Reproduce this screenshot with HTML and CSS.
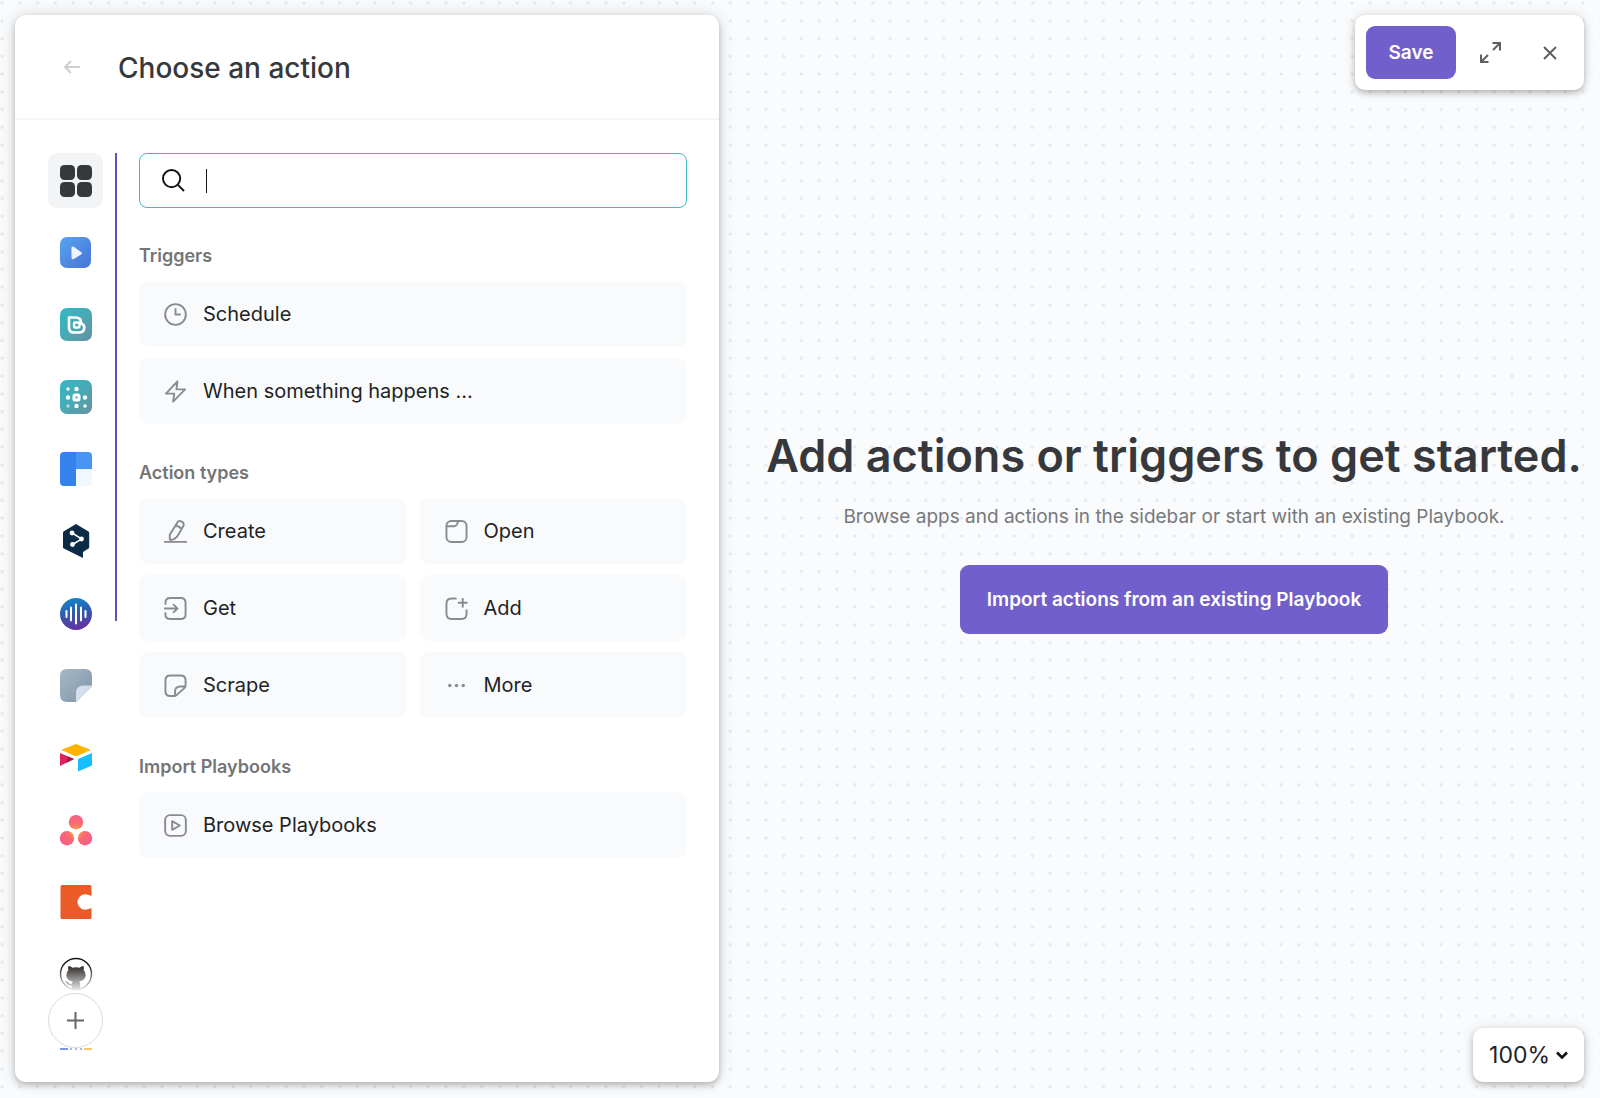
FILE: index.html
```html
<!DOCTYPE html>
<html lang="en">
<head>
<meta charset="utf-8">
<meta name="viewport" content="width=device-width, initial-scale=1">
<title>Choose an action</title>
<link rel="stylesheet" href="styles.css">
</head>
<body>
<div class="app">
  <aside class="panel">
    <header class="panel-header">
      <button class="icon-button back" type="button" aria-label="Back">
        <svg width="18" height="18" viewBox="0 0 18 18" fill="none" stroke="#cfcfcf" stroke-width="2"><path d="M17 9H2M8 3L2 9l6 6"/></svg>
      </button>
      <h1 class="panel-title">Choose an action</h1>
    </header>
    <div class="panel-body">
      <nav class="rail" aria-label="Apps">
        <button class="tile tile-active" type="button" aria-label="All apps">
          <svg width="34" height="34" viewBox="0 0 34 34" fill="#37383b"><rect x="1" y="1" width="15" height="15" rx="4.500"/><rect x="18" y="1" width="15" height="15" rx="4.500"/><rect x="1" y="18" width="15" height="15" rx="4.500"/><rect x="18" y="18" width="15" height="15" rx="4.500"/></svg>
        </button>
        <button class="tile" type="button" aria-label="Playbooks">
          <svg width="34" height="34" viewBox="0 0 34 34"><defs><linearGradient id="blue" x1="0" y1="0" x2="1" y2="1"><stop offset="0" stop-color="#55a5ee"/><stop offset="1" stop-color="#4a72d8"/></linearGradient></defs><rect x="1" y="1" width="31" height="31" rx="7" fill="url(#blue)"/><path d="M12.500 12v9.500q0 2.500 2.200 1.400l7.400-4.400q1.800-1.200 0-2.400l-7.400-5.300q-2.200-1.100-2.200 1.200z" fill="#eef5ff"/></svg>
        </button>
        <button class="tile" type="button" aria-label="Bardeen">
          <svg width="34" height="34" viewBox="0 0 34 34"><defs><linearGradient id="teal" x1="0" y1="0" x2="1" y2="1"><stop offset="0" stop-color="#31b9c4"/><stop offset=".5" stop-color="#48aab4"/><stop offset="1" stop-color="#688f9e"/></linearGradient></defs><rect x="1" y="0" width="32" height="33" rx="7" fill="url(#teal)"/><path d="M10 9.500h6.500q5.500 0 5.500 5v1q3.300 1 3.300 4 0 5-5.300 5h-5q-5 0-5-5z" fill="none" stroke="#fff" stroke-width="2.600" stroke-linejoin="round"/><rect x="15" y="14.500" width="5.500" height="5" rx="1" fill="none" stroke="#fff" stroke-width="2.300"/></svg>
        </button>
        <button class="tile" type="button" aria-label="Data tools">
          <svg width="34" height="34" viewBox="0 0 34 34"><rect x="1" y="0" width="32" height="34" rx="7" fill="url(#teal)"/><rect x="15" y="15" width="5" height="5" rx="1" fill="none" stroke="#fff" stroke-width="3"/><g fill="#fff"><circle cx="9" cy="9" r="1.700"/><circle cx="17.500" cy="9" r="2.200"/><circle cx="9" cy="17.500" r="2.200"/><circle cx="26" cy="17.500" r="2.200"/><circle cx="17.500" cy="26" r="2.200"/><circle cx="26" cy="26" r="1.800"/><circle cx="9" cy="26" r="1.700" opacity=".6"/></g></svg>
        </button>
        <button class="tile" type="button" aria-label="Clearbit">
          <svg width="34" height="34" viewBox="0 0 34 34"><path d="M5 0h12v34H5q-4 0-4-4V4q0-4 4-4z" fill="#3582ec"/><path d="M17 0h12q4 0 4 4v13H17z" fill="#4794f2"/><path d="M17 17h16v13q0 4-4 4H17z" fill="#f0f7ff"/></svg>
        </button>
        <button class="tile" type="button" aria-label="DeepL">
          <svg width="34" height="34" viewBox="0 0 34 34"><path d="M4.500 7.500L17 0l12.500 7.500q.7.500.7 1.500v14q0 1-.7 1.500L24 28v6L4.800 24.500Q4 24 4 23V9q0-1 .5-1.500z" fill="#0c2b47"/><path d="M14 9.500l8 5.200M13.500 20.500l9-5.300" stroke="#fff" stroke-width="1.500"/><g fill="#fff"><circle cx="13" cy="9" r="2.400"/><circle cx="22.500" cy="15" r="2.400"/><circle cx="13.500" cy="20.500" r="2.400"/></g></svg>
        </button>
        <button class="tile" type="button" aria-label="Voice">
          <svg width="34" height="34" viewBox="0 0 34 34"><defs><linearGradient id="voice" x1=".4" y1="0" x2=".6" y2="1"><stop offset="0" stop-color="#1385c8"/><stop offset=".5" stop-color="#3557ac"/><stop offset="1" stop-color="#682da0"/></linearGradient></defs><circle cx="17" cy="18" r="16" fill="url(#voice)"/><path d="M7.500 15v6M12 11.500v13M17 8.500v19M22 11.500v13M26.500 15v6" stroke="#fff" stroke-width="2" stroke-linecap="round"/></svg>
        </button>
        <button class="tile" type="button" aria-label="Scraper">
          <svg width="34" height="34" viewBox="0 0 34 34"><defs><linearGradient id="slate" x1="0" y1="0" x2="1" y2="1"><stop offset="0" stop-color="#a5b8c7"/><stop offset="1" stop-color="#8195a8"/></linearGradient></defs><path d="M8 1h18q7 0 7 7v10L17 34H8q-7 0-7-7V8q0-7 7-7z" fill="url(#slate)"/><path d="M33 17.500L17 34v-9q0-7.500 7.500-7.500z" fill="#d3e0ec"/></svg>
        </button>
        <button class="tile" type="button" aria-label="Airtable">
          <svg width="34" height="34" viewBox="0 0 34 34"><path d="M17 4l14 5.500q.8.400 0 .8L18 16q-1 .4-2 0L3 10.300q-.8-.4 0-.8z" fill="#fcb400"/><path d="M19 19l14-6v12.500L19 31.500z" fill="#18bfff"/><path d="M1 13l14 6L1 26z" fill="#d9265a"/><path d="M9 16.500l6 2.500-8 4z" fill="#ad1545"/></svg>
        </button>
        <button class="tile" type="button" aria-label="Asana">
          <svg width="34" height="34" viewBox="0 0 34 34"><defs><radialGradient id="coral" gradientUnits="userSpaceOnUse" cx="17" cy="20" r="17"><stop offset="0" stop-color="#ffad46"/><stop offset=".5" stop-color="#fb6b70"/><stop offset="1" stop-color="#f75f86"/></radialGradient></defs><g fill="url(#coral)"><circle cx="17" cy="10.200" r="7.200"/><circle cx="8" cy="26.200" r="7.200"/><circle cx="26" cy="26.200" r="7.200"/></g></svg>
        </button>
        <button class="tile" type="button" aria-label="Coda">
          <svg class="low" width="34" height="34" viewBox="0 0 34 34"><path d="M3 0h28q1.500 0 1.500 1.500V11q-8.500-4-12 1-4 5 0 10 3.500 5 12 1v9.500q0 1.500-1.500 1.500H3q-1.500 0-1.500-1.500v-31Q1.500 0 3 0z" fill="#ea5b27"/></svg>
        </button>
        <button class="tile" type="button" aria-label="GitHub">
          <svg class="low" width="34" height="34" viewBox="0 0 34 34"><circle cx="17" cy="17" r="15.500" fill="#fff" stroke="#161616" stroke-width="1.400"/><path d="M9.500 9q2.500.3 4 1.700 3.500-.7 7 0Q22 9.300 24.500 9q.8 2.200.2 4.200 2 2 2 4.800 0 5.300-6.700 6.500 1.200 1 1.200 3V32h-8.400v-3.500q-4 .5-5-2l-2-2.200q3-.4 4 2 1 1 3 .5 0-1.300 1-2.300-6.500-1.200-6.500-6.500 0-2.800 2-4.800-.6-2 .2-4.200z" fill="#26211f"/></svg>
        </button>
        <button class="tile" type="button" aria-label="Google Calendar">
          <svg width="34" height="34" viewBox="0 0 34 34"><rect x="1" y="1" width="8" height="32" fill="#7b97f0"/><rect x="9" y="1" width="17" height="32" fill="#fff"/><rect x="25" y="1" width="8" height="32" fill="#f5c768"/><path d="M12 10v14M17 10v14M22 10v14" stroke="#a9b8e6" stroke-width="2"/></svg>
        </button>
        <div class="rail-footer">
          <button class="add-app" type="button" aria-label="Add app">
            <svg width="17" height="17" viewBox="0 0 17 17" stroke="#646768" stroke-width="2"><path d="M8.500 0v17M0 8.500h17"/></svg>
          </button>
        </div>
      </nav>
      <div class="rail-line"></div>
      <main class="content">
        <div class="search">
          <svg width="23" height="23" viewBox="0 0 24 24" fill="none" stroke="#111" stroke-width="2"><circle cx="10" cy="10" r="9"/><path d="M16.500 16.500l6.500 6.500"/></svg>
          <span class="caret"></span>
          <input class="search-input" type="text" aria-label="Search actions">
        </div>

        <section class="group">
          <h2 class="group-title">Triggers</h2>
          <div class="cards">
            <button class="card card-wide" type="button"><svg class="glyph" viewBox="0 0 24 24"><circle cx="12" cy="12" r="10.800"/><path d="M12 5.500V12h5.500"/></svg>Schedule</button>
            <button class="card card-wide" type="button"><svg class="glyph" viewBox="0 0 24 24"><path d="M14 1.500L2 14.200h8.700L9.500 22.500 22 9.800h-9z" stroke-linejoin="round"/></svg>When something happens ...</button>
          </div>
        </section>

        <section class="group">
          <h2 class="group-title">Action types</h2>
          <div class="cards">
            <button class="card" type="button"><svg class="glyph" viewBox="0 0 24 24"><path d="M0 22.800h24M13.500 3.500q1.500-3.500 4.500-2l1 .5q2.500 1.500 1 4.500l-6 10.500-3.500 3-3 .8q-1.500.2-1.500-1.300v-4zM12.300 6q4 .3 6.200 4" stroke-linejoin="round"/></svg>Create</button>
            <button class="card" type="button"><svg class="glyph" viewBox="0 0 24 24"><rect x="1.500" y="1" width="21" height="22" rx="5"/><path d="M1.500 6.500h8q2 0 3-2l1.500-3.500"/></svg>Open</button>
            <button class="card" type="button"><svg class="glyph" viewBox="0 0 24 24"><path d="M1.500 8V6q0-5 5-5h11q5 0 5 5v12q0 5-5 5h-11q-5 0-5-5v-2M0 12h14M9.500 7.500L14 12l-4.500 4.500"/></svg>Get</button>
            <button class="card" type="button"><svg class="glyph" viewBox="0 0 24 24"><path d="M12 1.500H7q-5.500 0-5.500 5.500v10.500q0 5.500 5.500 5.500h10q5.500 0 5.500-5.500V13M18.500 1v10M13.500 6h10"/></svg>Add</button>
            <button class="card" type="button"><svg class="glyph" viewBox="0 0 24 24"><path d="M22.500 12.500V6.500q0-5-5-5h-11q-5 0-5 5v11.500q0 5 5 5H11q1 0 2-1l8.500-7.500q1-1 1-2zM11.500 23v-4.500q0-5.500 5.500-5.500h5"/></svg>Scrape</button>
            <button class="card" type="button"><svg class="glyph" viewBox="0 0 24 24"><g class="solid"><circle cx="5" cy="12" r="1.800"/><circle cx="12" cy="12" r="1.800"/><circle cx="19" cy="12" r="1.800"/></g></svg>More</button>
          </div>
        </section>

        <section class="group">
          <h2 class="group-title">Import Playbooks</h2>
          <div class="cards">
            <button class="card card-wide" type="button"><svg class="glyph" viewBox="0 0 24 24"><rect x="1.200" y="1.200" width="21.600" height="21.600" rx="5"/><path d="M8.500 7.500v9l8-4.500z" stroke-linejoin="round"/></svg>Browse Playbooks</button>
          </div>
        </section>
      </main>
    </div>
  </aside>

  <section class="canvas">
    <div class="toolbar">
      <button class="save" type="button">Save</button>
      <button class="icon-button tool" type="button" aria-label="Expand">
        <svg width="21" height="21" viewBox="0 0 21 21" fill="none" stroke="#5f6061" stroke-width="2"><path d="M12.500 1H20v7.500M20 1l-7 7M8.500 20H1v-7.500M1 20l7-7"/></svg>
      </button>
      <button class="icon-button tool" type="button" aria-label="Close">
        <svg width="14" height="14" viewBox="0 0 14 14" stroke="#5f6061" stroke-width="2"><path d="M1 1l12 12M13 1L1 13"/></svg>
      </button>
    </div>
    <div class="empty">
      <h2 class="empty-title">Add actions or triggers to get started.</h2>
      <p class="empty-text">Browse apps and actions in the sidebar or start with an existing Playbook.</p>
      <button class="import" type="button">Import actions from an existing Playbook</button>
    </div>
    <button class="zoom" type="button">100%
      <svg width="12" height="8" viewBox="0 0 12 8" fill="none" stroke="#111" stroke-width="2.600"><path d="M1 1.500l5 5 5-5"/></svg>
    </button>
  </section>
</div>
</body>
</html>
```
FILE: styles.css
```css
* {
  box-sizing: border-box;
}

body {
  margin: 0;
  font-family: Inter, "Liberation Sans", sans-serif;
  color: #222325;
  background: #fafbfc;
}

button {
  padding: 0;
  border: 0;
  background: none;
  color: inherit;
  font: inherit;
}

h1,
h2,
p {
  margin: 0;
}

svg {
  display: block;
  flex: none;
}

.app {
  --dot: calc(100vw / 90);
  display: flex;
  height: 100vh;
  min-height: 900px;
  padding: 15px 16px 16px 15px;
  background-image: radial-gradient(circle at 2px 3px, #e4e6e9 1px, transparent 2px);
  background-size: var(--dot) var(--dot);
}

.panel {
  display: flex;
  flex-direction: column;
  flex: none;
  width: 44vw;
  min-width: 560px;
  border-radius: 11px;
  background: #fff;
  box-shadow: 0 3px 6px rgba(0, 0, 0, 0.24), 0 0 18px rgba(0, 0, 0, 0.12);
}

.panel-header {
  display: flex;
  align-items: center;
  gap: 37px;
  height: 105px;
  padding-left: 48px;
  border-bottom: 2px solid #f5f6f6;
}

.icon-button {
  display: flex;
  align-items: center;
  justify-content: center;
}

.panel-title {
  padding-top: 2px;
  font-size: 28px;
  font-weight: 500;
  line-height: 34px;
  color: #37383b;
}

.panel-body {
  display: flex;
  flex: 1;
  min-height: 0;
  padding: 33px 32px 32px 33px;
}

.rail {
  position: relative;
  display: flex;
  flex-direction: column;
  gap: 17px;
  overflow: hidden;
  width: 55px;
}

.tile {
  display: flex;
  align-items: center;
  justify-content: center;
  flex: none;
  height: 55px;
  border-radius: 9px;
}

.tile-active {
  background: #f3f4f5;
}

.low {
  margin-top: 3px;
}

.rail-footer {
  position: absolute;
  right: 0;
  bottom: 2px;
  left: 0;
  padding-top: 28px;
  background: linear-gradient(rgba(255, 255, 255, 0), #fff 28px);
}

.add-app {
  display: flex;
  align-items: center;
  justify-content: center;
  width: 55px;
  height: 55px;
  border: 1px solid #d9dadc;
  border-radius: 50%;
  background: #fff;
}

.rail-line {
  width: 2px;
  height: 468px;
  margin: 0 22px 0 12px;
  background: #6350b4;
}

.content {
  flex: 1;
  min-width: 0;
}

.search {
  display: flex;
  align-items: center;
  height: 55px;
  padding: 0 22px;
  border: 1px solid #3fb9be;
  border-radius: 8px;
  background: #fff;
}

.caret {
  width: 1px;
  height: 24px;
  margin-left: 21px;
  background: #111;
}

.search-input {
  flex: 1;
  min-width: 0;
  padding: 0;
  border: 0;
  outline: 0;
  background: none;
  font: inherit;
  font-size: 20px;
}

.group {
  margin-top: 35px;
}

.group-title {
  margin-bottom: 12px;
  font-size: 18px;
  font-weight: 600;
  line-height: 26px;
  color: #737577;
}

.cards {
  display: grid;
  grid-template-columns: 1fr 1fr;
  gap: 11px 13px;
}

.group + .group {
  margin-top: 36px;
}

.card {
  display: flex;
  align-items: center;
  gap: 16px;
  height: 66px;
  padding-left: 25px;
  border-radius: 9px;
  background: #f9fafb;
  font-size: 20px;
}

.card-wide {
  grid-column: span 2;
}

.glyph {
  width: 23px;
  height: 23px;
  fill: none;
  stroke: #8a8b8d;
  stroke-width: 2;
}

.solid {
  fill: #8a8b8d;
  stroke: none;
}

.canvas {
  display: flex;
  flex: 1;
  flex-direction: column;
  align-items: flex-end;
  justify-content: space-between;
  min-width: 0;
}

.toolbar,
.zoom {
  border-radius: 10px;
  background: #fff;
  box-shadow: 0 3px 6px rgba(0, 0, 0, 0.24), 0 0 14px rgba(0, 0, 0, 0.1);
}

.toolbar {
  display: flex;
  align-items: center;
  height: 75px;
  padding: 0 5px 0 11px;
}

.save,
.import {
  border-radius: 9px;
  background: #715fcb;
  color: #fff;
  font-size: 19px;
  font-weight: 600;
}

.save {
  width: 90px;
  height: 53px;
  margin-right: 5px;
}

.tool {
  width: 59px;
  height: 53px;
}

.empty {
  align-self: stretch;
  padding: 0 0 55px 45px;
  text-align: center;
}

.empty-title {
  font-size: 45px;
  font-weight: 600;
  line-height: 54px;
  white-space: nowrap;
  color: #37383b;
}

.empty-text {
  margin: 20px 0 34px;
  font-size: 19px;
  line-height: 28px;
  color: #77797b;
}

.import {
  height: 69px;
  padding: 0 27px;
}

.zoom {
  display: flex;
  align-items: center;
  gap: 6px;
  height: 54px;
  padding: 0 16px;
  font-size: 23px;
}
```
